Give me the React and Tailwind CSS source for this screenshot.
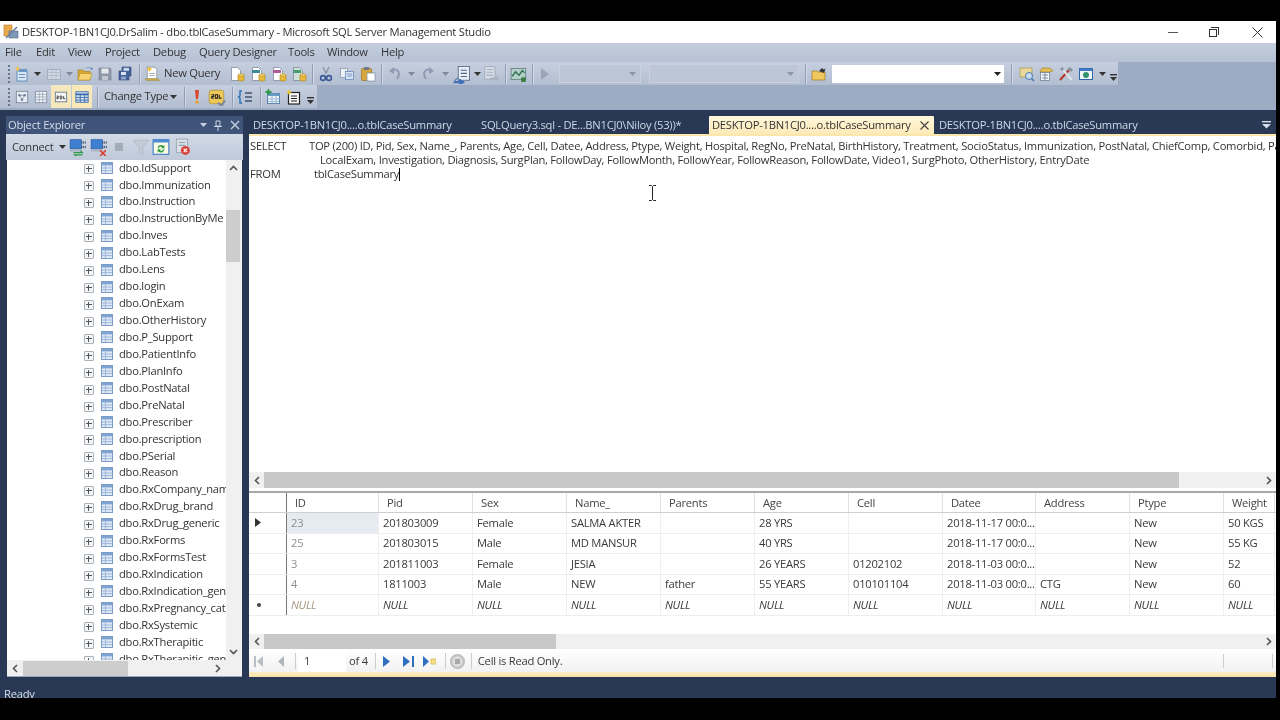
import React from "react";

const Svg = ({ children, s = 16, className = "" }) => (
  <svg width={s} height={s} viewBox="0 0 16 16" className={"block shrink-0 " + className}>{children}</svg>
);
const Slot = ({ className = "", children }) => (
  <span className={"flex shrink-0 items-center justify-center " + className}>{children}</span>
);
const Dd = ({ c = "#333" }) => (
  <svg width="7" height="4" viewBox="0 0 7 4" className="block"><path d="M0 0h7L3.5 4z" fill={c} /></svg>
);
const Sep = () => <span className="block h-[20px] w-px bg-[#8f9db5] shadow-[1px_0_0_#d5dbe6]" />;
const Grip = () => (
  <span className="flex h-[18px] w-[2px] flex-col justify-between">
    {[0, 1, 2, 3, 4].map((i) => <span key={i} className="block h-[2px] w-[2px] bg-[#66748c]" />)}
  </span>
);
const Overflow = () => (
  <svg width="7" height="8" viewBox="0 0 7 8" className="block mt-2"><path d="M0 0h7v1.4H0z" fill="#333" /><path d="M0 3h7L3.5 7z" fill="#333" /></svg>
);

const Db = ({ x = 9, y = 8 }) => (
  <g>
    <path d={`M${x} ${y + 1}v5c0 1.3 6 1.3 6 0v-5z`} fill="#e8b93a" stroke="#a87f1d" strokeWidth=".6" />
    <ellipse cx={x + 3} cy={y + 1} rx="3" ry="1.2" fill="#f5d873" stroke="#a87f1d" strokeWidth=".5" />
  </g>
);
const DocIcon = ({ fill = "#fff", bar, children }) => (
  <Svg>
    <path d="M2.5 1.5h6l3 3v10h-9z" fill={fill} stroke="#7e8ba0" strokeWidth=".8" />
    {bar && <rect x="2" y="4" width="8" height="3" fill={bar} />}
    {children}
    <Db />
  </Svg>
);
const NewProj = () => (
  <Svg>
    <rect x="3" y="5" width="10" height="10" fill="#d7e6f5" stroke="#4d7fae" strokeWidth=".8" />
    <rect x="5" y="3" width="8" height="3" fill="#6d97c4" />
    <path d="M3.5 0l1 2 2 .7-2 .8-1 2-.8-2-2-.8 2-.7z" fill="#f3c13a" />
    <rect x="5" y="8" width="6" height="1" fill="#7193ba" /><rect x="5" y="11" width="6" height="1" fill="#7193ba" />
  </Svg>
);
const DimGrid = () => (
  <Svg>
    <rect x="1.5" y="3.5" width="13" height="10" fill="#d0d7e3" stroke="#a4afc0" />
    <path d="M1.5 6.5h13M1.5 9.5h13M6 3.5v10M10 3.5v10" stroke="#aab4c4" strokeWidth=".7" />
  </Svg>
);
const Folder = () => (
  <Svg>
    <path d="M1 4h5l1 1.5h6V14H1z" fill="#d9a531" stroke="#a47a1b" strokeWidth=".6" />
    <path d="M3 7.5h12L13 14H1z" fill="#f6d474" stroke="#b88d2a" strokeWidth=".6" />
    <path d="M8 4c2-3 4-3 6-1.5l-1 .8 2.4.7V1.5l-.9.6C12 .3 9 .5 8 4z" fill="#5f7faa" />
  </Svg>
);
const Save = () => (
  <Svg>
    <path d="M2 2h11l1 1v11H2z" fill="#8d97a8" stroke="#76808f" strokeWidth=".6" />
    <rect x="4.5" y="2.5" width="7" height="5" fill="#e5e8ed" />
    <rect x="5" y="10" width="6" height="4" fill="#c2c8d2" />
  </Svg>
);
const SaveAll = () => (
  <Svg>
    <path d="M5 1h9v9h-2v4H2V5h3z" fill="#45629b" stroke="#2f4678" strokeWidth=".6" />
    <rect x="6.5" y="1.8" width="5.5" height="3" fill="#c9d6ea" />
    <rect x="4" y="6" width="5" height="3" fill="#d9e2f0" />
    <rect x="4" y="10.5" width="5" height="3" fill="#8ba3c8" />
  </Svg>
);
const NewQuery = () => (
  <Svg s={17}>
    <path d="M4 2h7l2 2v9H4z" fill="#fff" stroke="#7c8696" strokeWidth=".7" />
    <path d="M2 13h12l1.5 1.5H3z" fill="#d9b43c" stroke="#8c7a2c" strokeWidth=".4" />
    <path d="M6 1l1 2 2 .8-2 .8-1 2-.9-2-2-.8 2-.8z" fill="#f2c328" />
    <path d="M6 8h5M6 10h5" stroke="#8d97a8" strokeWidth=".8" />
  </Svg>
);
const Cut = () => (
  <Svg>
    <path d="M5 1l3.3 7M11 1L7.7 8" stroke="#8d98a8" strokeWidth="1.5" />
    <circle cx="5" cy="12" r="2.4" fill="none" stroke="#3d5a96" strokeWidth="1.6" />
    <circle cx="11" cy="12" r="2.4" fill="none" stroke="#3d5a96" strokeWidth="1.6" />
  </Svg>
);
const Copy = () => (
  <Svg>
    <rect x="1.5" y="2.5" width="7" height="9" fill="#eef2f8" stroke="#8794a8" strokeWidth=".7" />
    <rect x="6.5" y="5.5" width="8" height="8" fill="#d7e4f5" stroke="#5b7fb3" strokeWidth=".7" />
    <path d="M8 8h5M8 10h5" stroke="#5b7fb3" strokeWidth=".7" />
  </Svg>
);
const Paste = () => (
  <Svg>
    <rect x="1.5" y="2.5" width="10" height="12" rx="1" fill="#d7a63c" stroke="#9a7320" strokeWidth=".7" />
    <rect x="4" y="1" width="5" height="3" fill="#6f7a8c" />
    <rect x="7" y="7" width="8" height="8" fill="#fff" stroke="#7e8ba0" strokeWidth=".7" />
  </Svg>
);
const Undo = ({ flip }) => (
  <Svg className={flip ? "-scale-x-100" : ""}>
    <path d="M5 4c6-2 9 3 5 9" fill="none" stroke="#8e9bb0" strokeWidth="2" />
    <path d="M7 1L2 5l5 3z" fill="#8e9bb0" />
  </Svg>
);
const Results = () => (
  <Svg s={20}>
    <rect x="5" y="2" width="9" height="11" fill="#e9eef6" stroke="#586a8a" strokeWidth=".7" />
    <path d="M7 5h5M7 7.5h5M7 10h5" stroke="#566a8c" strokeWidth=".9" />
    <path d="M5 11c-2 1-3 2-3 3h4v-2l4 2.5L6 17v-2H1" fill="#3b72c4" stroke="#2b5ea8" strokeWidth=".5" />
  </Svg>
);
const ResultsDim = () => (
  <Svg s={18}>
    <rect x="2.5" y="1.5" width="9" height="11" fill="#d9dee7" stroke="#9aa5b7" strokeWidth=".7" />
    <path d="M4 4h6M4 6.5h6M4 9h6" stroke="#a4aebe" strokeWidth=".9" />
    <path d="M7 11h5V9l3.5 3-3.5 3v-2H7z" fill="#a9b2c0" />
  </Svg>
);
const Chart = () => (
  <Svg s={18}>
    <rect x="1" y="3" width="13" height="10" fill="#b3d1c8" stroke="#5d7a7a" strokeWidth=".7" />
    <path d="M2 10l3-4 3 3 3-4 2 2" fill="none" stroke="#2f6e52" strokeWidth="1.2" />
    <rect x="10" y="11" width="4" height="4" fill="#3a7a3a" />
  </Svg>
);
const Play = ({ c = "#9aa6b8" }) => <Svg><path d="M4 2l8 6-8 6z" fill={c} /></Svg>;
const FolderFind = () => (
  <Svg>
    <path d="M1 5h5l1 1h7v8H1z" fill="#efc95f" stroke="#a47a1b" strokeWidth=".7" />
    <path d="M8 5l3-3 1.5 1.5 2-1L13 7z" fill="#333" />
  </Svg>
);
const Explorer = () => (
  <Svg>
    <rect x="1" y="2" width="12" height="9" fill="#e8d79a" stroke="#a68b3d" strokeWidth=".6" />
    <circle cx="10" cy="10" r="3.5" fill="#c8dcf2" stroke="#4d78ab" />
    <path d="M12.5 12.5l2.5 2.5" stroke="#4d78ab" strokeWidth="1.6" />
  </Svg>
);
const Props = () => (
  <Svg>
    <path d="M4 2h8l3 3-4 1H2z" fill="#e3bd58" stroke="#a47a1b" strokeWidth=".6" />
    <rect x="2.5" y="6.5" width="9" height="8" fill="#f4f6f9" stroke="#66758c" strokeWidth=".7" />
    <path d="M4 9h6M4 12h6M7 7v7" stroke="#6b7a92" strokeWidth=".8" />
  </Svg>
);
const Tools = () => (
  <Svg>
    <path d="M2 14L11 4" stroke="#b3362c" strokeWidth="2" />
    <path d="M14 14L5 4" stroke="#dfe4ea" strokeWidth="2" />
    <path d="M9 3l3-2 3 3-2 2z" fill="#8a94a5" />
    <path d="M2 3l2-2 2 2-1.5 2z" fill="#8a94a5" />
  </Svg>
);
const Web = () => (
  <Svg>
    <rect x="1.5" y="2.5" width="13" height="11" fill="#f0f5fb" stroke="#2f65a8" />
    <rect x="1.5" y="2.5" width="13" height="2.5" fill="#3f7cc4" />
    <circle cx="8" cy="9" r="3" fill="#34906b" />
  </Svg>
);
const DiagramPane = () => (
  <Svg s={14}>
    <rect x="1.5" y="1.5" width="13" height="13" fill="#e8edf4" stroke="#7b8798" />
    <circle cx="5" cy="6" r="1.4" fill="#6a7b93" /><circle cx="11" cy="6" r="1.4" fill="#6a7b93" /><circle cx="8" cy="11" r="1.4" fill="#6a7b93" />
    <path d="M5 6h6L8 11z" fill="none" stroke="#6a7b93" strokeWidth=".7" />
  </Svg>
);
const GridPane = () => (
  <Svg s={14}>
    <rect x="1.5" y="1.5" width="13" height="13" fill="#eef1f6" stroke="#8693a6" />
    <path d="M1.5 5h13M1.5 8h13M1.5 11h13M6 1.5v13M10 1.5v13" stroke="#8693a6" strokeWidth=".7" />
  </Svg>
);
const SqlPane = () => (
  <Svg s={14}>
    <rect x="1.5" y="2.5" width="13" height="11" fill="#f7f7f7" stroke="#66758a" />
    <path d="M3 7h2v1.5H3.3V10H5M7 7h2v3H7zM11 7v3h2" fill="none" stroke="#222" strokeWidth=".9" />
  </Svg>
);
const ResPane = () => (
  <Svg s={14}>
    <rect x="1" y="2" width="14" height="12" fill="#d5e3f2" stroke="#3769a8" />
    <path d="M1 5h14" stroke="#3769a8" strokeWidth="2" />
    <path d="M1 8.5h14M1 11.5h14M6 5v9M11 5v9" stroke="#3769a8" strokeWidth="1" />
  </Svg>
);
const Exclaim = () => (
  <Svg>
    <path d="M6 1h4L9 10H7z" fill="#d9432f" /><circle cx="8" cy="13" r="1.7" fill="#e3a021" />
  </Svg>
);
const SqlCheck = () => (
  <Svg s={18}>
    <rect x="1" y="2" width="13" height="12" rx="2" fill="#ecc858" stroke="#a9882c" strokeWidth=".6" />
    <path d="M3 6h2v1.5H3.3V9H5M6.5 6H8.5v3h-2zM10 6v3h2" fill="none" stroke="#222" strokeWidth=".9" />
    <path d="M9 13l3 3 3-5" fill="none" stroke="#7b8799" strokeWidth="1.8" />
  </Svg>
);
const Indent = () => (
  <Svg>
    <path d="M5 2H3v5l-1.5 1L3 9v5h2" fill="none" stroke="#2a6db5" strokeWidth="1.4" />
    <path d="M8 4h7M8 8h7M8 12h7" stroke="#40536f" strokeWidth="1.3" />
  </Svg>
);
const AddTable = () => (
  <Svg>
    <rect x="2.5" y="4.5" width="12" height="10" fill="#eef4fa" stroke="#5a85b1" />
    <rect x="2.5" y="4.5" width="12" height="2.5" fill="#6a9ac8" />
    <path d="M2.5 10h12M2.5 12.5h12M7 7v7.5M11 7v7.5" stroke="#7fa2c6" strokeWidth=".7" />
    <path d="M3.5 0v6M.5 3h6" stroke="#2f9a45" strokeWidth="1.8" />
  </Svg>
);
const NoteStar = () => (
  <Svg>
    <rect x="3.5" y="3.5" width="11" height="11.5" fill="#fafafa" stroke="#222" strokeWidth="1.2" />
    <path d="M6 7h6M6 9.5h6M6 12h6" stroke="#222" strokeWidth="1" />
    <path d="M4 0l1 2.4 2.4.6L5 4 4 6.5 3 4 .6 3 3 2.4z" fill="#ecc52a" />
  </Svg>
);
const SrvA = ({ children }) => (
  <Svg s={18}>
    <rect x="1" y="1.5" width="10" height="8" fill="#3f7fd1" stroke="#28599f" strokeWidth=".6" />
    <rect x="1" y="10" width="10" height="2" fill="#a9b3c4" />
    <path d="M11.5 3v2M13 3v2M14.5 3v2M11.5 7v2M13 7v2M14.5 7v2" stroke="#3a4a66" strokeWidth=".8" />
    {children}
  </Svg>
);
const Stop = () => <span className="block h-[8px] w-[8px] bg-[#a2acb9]" />;
const Filter = () => <Svg s={18}><path d="M1 2h14L9.5 8.5V15l-3-2V8.5z" fill="#c5ccd6" stroke="#aab2bf" strokeWidth=".6" /></Svg>;
const Refresh = () => (
  <Svg s={18}>
    <rect x="1" y="1.5" width="14" height="13" fill="#fbfbe8" stroke="#3e7dc4" strokeWidth="1" />
    <rect x="1" y="1.5" width="14" height="2.5" fill="#4e8bd0" />
    <path d="M5 9a3 3 0 0 1 5-2l1-1v3H8l1-1a2 2 0 0 0-3 1zM11 10a3 3 0 0 1-5 2l-1 1v-3h3l-1 1a2 2 0 0 0 3-1z" fill="#2c9a3a" />
  </Svg>
);
const Script = () => (
  <Svg s={18}>
    <path d="M3 1h10v12H3z" fill="#dce1e8" stroke="#8f99a8" strokeWidth=".7" />
    <path d="M5 4h6M5 6.5h6" stroke="#98a2b2" />
    <circle cx="11" cy="11" r="4" fill="#d9443c" />
    <path d="M9.5 9.5l3 3M12.5 9.5l-3 3" stroke="#fff" />
  </Svg>
);
const AppIcon = () => (
  <Svg>
    <rect x="1" y="1" width="8" height="11" fill="#e9a94d" stroke="#b77a27" strokeWidth=".6" />
    <rect x="6" y="7" width="9" height="7" fill="#7f97b8" stroke="#566c8b" strokeWidth=".6" />
    <path d="M3 14L14 3" stroke="#6b7f9e" strokeWidth="1.6" />
  </Svg>
);
const TableIcon = () => (
  <svg width="12" height="12" viewBox="0 0 12 12" className="block shrink-0">
    <rect x=".5" y=".5" width="11" height="11" fill="#dfe9f6" stroke="#7b9cc5" />
    <rect x="1" y="1" width="10" height="2.4" fill="#7fa3d2" />
    <path d="M1 6h10M1 8.6h10" stroke="#9db8da" />
    <path d="M4.5 3.4V11" stroke="#9db8da" />
  </svg>
);
const Plus = () => (
  <span className="relative block h-[10px] w-[10px] shrink-0 rounded-[1px] border border-[#a9b1ba] bg-[#f4f5f6]">
    <span className="absolute left-[1px] top-[3px] h-px w-[6px] bg-[#555]" />
    <span className="absolute left-[3px] top-[1px] h-[6px] w-px bg-[#555]" />
  </span>
);
const Chev = ({ d, c = "#555" }) => (
  <svg width="9" height="9" viewBox="0 0 9 9" className="block shrink-0">
    <path d={d} fill="none" stroke={c} strokeWidth="1.6" />
  </svg>
);
const L = "M6 1L2.5 4.5 6 8";
const R = "M3 1l3.5 3.5L3 8";
const U = "M1 6l3.5-3.5L8 6";
const D = "M1 3l3.5 3.5L8 3";

const tree = ["IdSupport","Immunization","Instruction","InstructionByMe","Inves","LabTests","Lens","login","OnExam","OtherHistory","P_Support","PatientInfo","PlanInfo","PostNatal","PreNatal","Prescriber","prescription","PSerial","Reason","RxCompany_name","RxDrug_brand","RxDrug_generic","RxForms","RxFormsTest","RxIndication","RxIndication_generic","RxPregnancy_cat","RxSystemic","RxTherapitic","RxTherapitic_generic"];

const heads = ["ID","Pid","Sex","Name_","Parents","Age","Cell","Datee","Address","Ptype","Weight"];
const rows = [
  ["23","201803009","Female","SALMA AKTER","","28 YRS","","2018-11-17 00:0...","","New","50 KGS"],
  ["25","201803015","Male","MD MANSUR","","40 YRS","","2018-11-17 00:0...","","New","55 KG"],
  ["3","201811003","Female","JESIA","","26 YEARS","01202102","2018-11-03 00:0...","","New","52"],
  ["4","1811003","Male","NEW","father","55 YEARS","010101104","2018-11-03 00:0...","CTG","New","60"],
  Array(11).fill("NULL"),
];
const cols = "grid grid-cols-[38px_92px_94px_94px_94px_94px_94px_94px_93px_94px_94px_51px]";

export default function App() {
  return (
    <div className="relative flex h-[720px] w-[1280px] flex-col overflow-hidden bg-black pb-[22px] pr-[4px] pt-[21px] font-['Open_Sans','Noto_Sans',sans-serif] text-[11.2px] tracking-[-0.25px] text-[#3a3a3a] blur-[0.35px]">
      {/* title bar */}
      <div className="flex h-[22px] shrink-0 items-center bg-white pl-[3px]">
        <AppIcon />
        <span className="ml-[3px] whitespace-nowrap text-[#333]">DESKTOP-1BN1CJ0.DrSalim - dbo.tblCaseSummary - Microsoft SQL Server Management Studio</span>
        <span className="ml-auto flex items-center">
          <span className="block h-px w-[10px] bg-[#555]" />
          <span className="relative ml-[31px] block h-[10px] w-[10px]">
            <span className="absolute bottom-0 left-0 h-[8px] w-[8px] border border-[#333] bg-white" />
            <span className="absolute right-0 top-0 h-[8px] w-[8px] border-r border-t border-[#333]" />
          </span>
          <svg width="11" height="11" viewBox="0 0 11 11" className="ml-[33px] mr-[13px] block"><path d="M.5.5l10 10M10.5.5l-10 10" stroke="#333" /></svg>
        </span>
      </div>
      {/* menu */}
      <div className="flex h-[19px] shrink-0 items-center bg-gradient-to-b from-[#c3cddd] to-[#b6c2d5] pl-[5px] text-[#333]">
        <span className="w-[31px]">File</span><span className="w-[32px]">Edit</span><span className="w-[37px]">View</span><span className="w-[48px]">Project</span><span className="w-[46px]">Debug</span><span className="w-[89px]">Query Designer</span><span className="w-[39px]">Tools</span><span className="w-[54px]">Window</span><span>Help</span>
      </div>
      {/* toolbars */}
      <div className="flex h-[48px] shrink-0 flex-col bg-[#9dabc3]">
        <div className="flex h-[23px] w-[1118px] shrink-0 items-center bg-gradient-to-b from-[#c6cfdf] to-[#b2bed1] pl-[5px]">
          <Slot className="w-[8px]"><Grip /></Slot>
          <Slot className="w-[17px]"><NewProj /></Slot>
          <Slot className="w-[14px]"><Dd /></Slot>
          <Slot className="w-[20px]"><DimGrid /></Slot>
          <Slot className="w-[10px]"><Dd c="#7e8a9c" /></Slot>
          <Slot className="w-[21px]"><Folder /></Slot>
          <Slot className="w-[20px]"><Save /></Slot>
          <Slot className="w-[20px]"><SaveAll /></Slot>
          <Slot className="w-[8px]"><Sep /></Slot>
          <Slot className="w-[17px]"><NewQuery /></Slot>
          <span className="w-[66px] whitespace-nowrap pl-[4px] text-[#333]">New Query</span>
          <Slot className="w-[21px]"><DocIcon /></Slot>
          <Slot className="w-[21px]"><DocIcon bar="#3f8a96" /></Slot>
          <Slot className="w-[21px]"><DocIcon bar="#b05a94" /></Slot>
          <Slot className="w-[20px]"><DocIcon fill="#cfe0d8" bar="#4d9a72" /></Slot>
          <Slot className="w-[7px]"><Sep /></Slot>
          <Slot className="w-[20px]"><Cut /></Slot>
          <Slot className="w-[21px]"><Copy /></Slot>
          <Slot className="w-[21px]"><Paste /></Slot>
          <Slot className="w-[7px]"><Sep /></Slot>
          <Slot className="w-[19px]"><Undo /></Slot>
          <Slot className="w-[14px]"><Dd c="#7e8a9c" /></Slot>
          <Slot className="w-[20px]"><Undo flip /></Slot>
          <Slot className="w-[14px]"><Dd c="#7e8a9c" /></Slot>
          <Slot className="w-[20px]"><Results /></Slot>
          <Slot className="w-[10px]"><Dd /></Slot>
          <Slot className="w-[18px]"><ResultsDim /></Slot>
          <Slot className="w-[10px]"><Sep /></Slot>
          <Slot className="w-[17px]"><Chart /></Slot>
          <Slot className="w-[10px]"><Sep /></Slot>
          <Slot className="w-[16px]"><Play /></Slot>
          <div className="ml-[6px] flex h-[19px] w-[82px] items-center justify-end border border-[#cad1dd] bg-[#bcc6d7] pr-[4px]"><Dd c="#8a95a6" /></div>
          <div className="ml-[8px] flex h-[19px] w-[150px] items-center justify-end border border-[#cad1dd] bg-[#bcc6d7] pr-[4px]"><Dd c="#8a95a6" /></div>
          <Slot className="w-[12px]"><Sep /></Slot>
          <Slot className="w-[15px]"><FolderFind /></Slot>
          <div className="ml-[6px] flex h-[18px] w-[172px] items-center justify-end rounded-[1px] bg-white pr-[3px]"><Dd c="#222" /></div>
          <Slot className="w-[14px]"><Sep /></Slot>
          <Slot className="w-[17px]"><Explorer /></Slot>
          <Slot className="w-[21px]"><Props /></Slot>
          <Slot className="w-[20px]"><Tools /></Slot>
          <Slot className="w-[20px]"><Web /></Slot>
          <Slot className="w-[12px]"><Dd /></Slot>
          <Slot className="w-[10px]"><Overflow /></Slot>
        </div>
        <div className="flex h-[23px] w-[317px] shrink-0 items-center bg-gradient-to-b from-[#c6cfdf] to-[#b2bed1] pl-[5px]">
          <Slot className="w-[8px]"><Grip /></Slot>
          <Slot className="w-[17px]"><DiagramPane /></Slot>
          <Slot className="w-[21px]"><GridPane /></Slot>
          <Slot className="h-[23px] w-[20px] bg-[#f6e8bd]"><SqlPane /></Slot>
          <Slot className="ml-px h-[23px] w-[20px] bg-[#f9e8b8]"><ResPane /></Slot>
          <Slot className="w-[11px]"><Sep /></Slot>
          <span className="w-[66px] shrink-0 whitespace-nowrap pl-[1px] text-[#333]">Change Type</span>
          <Slot className="w-[9px]"><Dd /></Slot>
          <Slot className="w-[12px]"><Sep /></Slot>
          <Slot className="w-[14px]"><Exclaim /></Slot>
          <Slot className="w-[26px]"><SqlCheck /></Slot>
          <Slot className="w-[4px]"><Sep /></Slot>
          <Slot className="w-[22px]"><Indent /></Slot>
          <Slot className="w-[8px]"><Sep /></Slot>
          <Slot className="w-[17px]"><AddTable /></Slot>
          <Slot className="w-[24px]"><NoteStar /></Slot>
          <Slot className="w-[11px]"><Overflow /></Slot>
        </div>
      </div>
      {/* main */}
      <div className="flex min-h-0 flex-1 flex-col bg-[#293955]">
        <div className="flex h-[567px] shrink-0 pl-[6px] pt-[6px]">
          {/* object explorer */}
          <div className="flex w-[237px] shrink-0 flex-col">
            <div className="flex h-[18px] shrink-0 items-center rounded-t-[1px] bg-[#3f5478] pl-[2px] text-[#d3dceb]">
              <span>Object Explorer</span>
              <span className="ml-auto"><Dd c="#c9d3e2" /></span>
              <svg width="8" height="11" viewBox="0 0 8 11" className="ml-[7px] block"><path d="M2 1h4v5H2zM0 6.5h8M4 7v4" fill="none" stroke="#c9d3e2" /></svg>
              <svg width="10" height="10" viewBox="0 0 10 10" className="ml-[8px] mr-[3px] block"><path d="M1 1l8 8M9 1l-8 8" stroke="#c9d3e2" strokeWidth="1.3" /></svg>
            </div>
            <div className="flex h-[26px] shrink-0 items-center bg-gradient-to-b from-[#d2dae6] to-[#bfc9da] pl-[6px] text-[#333]">
              <span className="w-[46px] shrink-0 whitespace-nowrap">Connect</span>
              <Slot className="w-[9px]"><Dd /></Slot>
              <Slot className="ml-[2px] w-[18px]"><SrvA><path d="M4 13h8l-2-2M12 15H5l2 1.5" fill="none" stroke="#2f9a45" strokeWidth="1" /></SrvA></Slot>
              <Slot className="ml-[2px] w-[20px]"><SrvA><path d="M9 11l5 5M14 11l-5 5" stroke="#d9432f" strokeWidth="1.4" /></SrvA></Slot>
              <Slot className="w-[20px]"><Stop /></Slot>
              <Slot className="ml-[2px] w-[20px]"><Filter /></Slot>
              <Slot className="w-[20px]"><Refresh /></Slot>
              <Slot className="ml-[1px] w-[20px]"><Script /></Slot>
            </div>
            <div className="mx-px flex min-h-0 flex-1 flex-col border-b border-[#9ba5b5] bg-white">
              <div className="flex min-h-0 flex-1">
                <div className="min-w-0 flex-1 overflow-hidden">
                  {tree.map((t) => (
                    <div key={t} className="flex h-[16.94px] items-center pb-[1px] pl-[77px] text-[#333]">
                      <span className="mt-[3px]"><Plus /></span>
                      <span className="ml-[7px]"><TableIcon /></span>
                      <span className="ml-[6px] whitespace-nowrap">dbo.{t}</span>
                    </div>
                  ))}
                </div>
                <div className="flex w-[16px] shrink-0 flex-col items-center bg-[#f0f0f0] pr-[2px]">
                  <span className="mt-[4px] h-[9px]"><Chev d={U} /></span>
                  <span className="mt-[37px] block h-[52px] w-[14px] bg-[#cdcdcd]" />
                  <span className="mb-[4px] mt-auto h-[9px]"><Chev d={D} /></span>
                </div>
              </div>
              <div className="flex h-[16px] shrink-0 items-center bg-[#f0f0f0]">
                <span className="ml-[4px]"><Chev d={L} /></span>
                <span className="ml-[3px] block h-[15px] w-[105px] bg-[#cdcdcd]" />
                <span className="ml-auto mr-[20px]"><Chev d={R} /></span>
              </div>
            </div>
          </div>
          {/* right column */}
          <div className="ml-[6px] flex min-w-0 flex-1 flex-col">
            <div className="flex h-[18px] shrink-0 items-center text-[#cdd8e8]">
              <span className="w-[232px] shrink-0 whitespace-nowrap pl-[4px] pt-[1px]">DESKTOP-1BN1CJ0....o.tblCaseSummary</span>
              <span className="w-[228px] shrink-0 whitespace-nowrap pt-[1px]">SQLQuery3.sql - DE...BN1CJ0\Niloy (53))*</span>
              <span className="flex h-[18px] w-[225px] shrink-0 items-center whitespace-nowrap rounded-t-[1px] bg-gradient-to-b from-[#fff8dc] to-[#fdeab8] pl-[3px] pt-[1px] text-[#333]">
                DESKTOP-1BN1CJ0....o.tblCaseSummary
                <svg width="9" height="9" viewBox="0 0 9 9" className="ml-auto mr-[5px] block"><path d="M.5.5l8 8M8.5.5l-8 8" stroke="#444" strokeWidth="1.1" /></svg>
              </span>
              <span className="whitespace-nowrap pl-[5px] pt-[1px]">DESKTOP-1BN1CJ0....o.tblCaseSummary</span>
              <span className="ml-auto mr-[5px]">
                <svg width="9" height="8" viewBox="0 0 9 8" className="block"><path d="M0 0h9v1.4H0z" fill="#d5deeb" /><path d="M0 3h9L4.5 7.5z" fill="#d5deeb" /></svg>
              </span>
            </div>
            <div className="h-[2px] shrink-0 bg-[#fbe6ac]" />
            <div className="flex h-[336px] shrink-0 flex-col overflow-hidden bg-white pl-[1px] pt-[3px] text-[#333]">
              <div className="flex h-[14px] items-center whitespace-nowrap"><span className="w-[59px] shrink-0">SELECT</span><span className="shrink-0">TOP (200) ID, Pid, Sex, Name_, Parents, Age, Cell, Datee, Address, Ptype, Weight, Hospital, RegNo, PreNatal, BirthHistory, Treatment, SocioStatus, Immunization, PostNatal, ChiefComp, Comorbid, PastHistory,</span></div>
              <div className="flex h-[14px] items-center whitespace-nowrap pl-[70px]">LocalExam, Investigation, Diagnosis, SurgPlan, FollowDay, FollowMonth, FollowYear, FollowReason, FollowDate, Video1, SurgPhoto, OtherHistory, EntryDate</div>
              <div className="flex h-[14px] items-center whitespace-nowrap"><span className="w-[64px] shrink-0">FROM</span><span>tblCaseSummary</span><span className="block h-[13px] w-px bg-black" /></div>
            </div>
            <div className="flex h-[16px] shrink-0 items-center bg-[#f0f0f0]">
              <span className="ml-[4px]"><Chev d={L} /></span>
              <span className="ml-[2px] block h-[16px] w-[915px] bg-[#c8c8c8]" />
              <span className="ml-auto mr-[3px]"><Chev d={R} /></span>
            </div>
            <div className="h-[5px] shrink-0 border-b-2 border-[#a8a8a8] bg-white" />
            {/* results */}
            <div className="flex min-h-0 flex-1 flex-col overflow-hidden bg-white">
              <div className={cols + " h-[20px] shrink-0 border-b border-[#cfcfcf] text-[#444]"}>
                <span className="border-r border-[#777]" />
                {heads.map((h) => (
                  <span key={h} className="flex items-center whitespace-nowrap border-r border-[#e2e2e2] pl-[8px] pt-[1px]">{h}</span>
                ))}
              </div>
              {rows.map((r, ri) => (
                <div key={ri} className={cols + " h-[20.5px] shrink-0 border-b border-[#eeeeee]"}>
                  <span className="flex items-center justify-center border-r border-[#777] pr-[2px]">
                    {ri === 0 && <svg width="6" height="9" viewBox="0 0 6 9" className="mr-[18px] block"><path d="M0 0l6 4.5L0 9z" fill="#333" /></svg>}
                    {ri === 4 && <span className="mr-[16px] block h-[4px] w-[4px] rounded-full bg-[#444]" />}
                  </span>
                  {r.map((c, ci) => (
                    <span key={ci} className={"flex items-center overflow-hidden whitespace-nowrap border-r border-[#efefef] pl-[4px] pt-[1px] " + (ci === 0 ? (ri === 4 ? "text-[#a4957f] " : "text-[#8f8f8f] ") : "text-[#3a3a3a] ") + (ri === 4 ? "italic " : "") + (ci === 0 && ri === 0 ? "bg-[#e6ebf1]" : "")}>{c}</span>
                  ))}
                </div>
              ))}
              <div className="flex-1" />
              <div className="flex h-[15px] shrink-0 items-center bg-[#f0f0f0]">
                <span className="ml-[4px]"><Chev d={L} /></span>
                <span className="ml-[2px] block h-[15px] w-[292px] bg-[#c8c8c8]" />
                <span className="ml-auto mr-[3px]"><Chev d={R} /></span>
              </div>
              <div className="flex h-[23px] shrink-0 items-center bg-gradient-to-b from-white to-[#f2f2f2] pl-[5px] pt-[1px]">
                <svg width="9" height="11" viewBox="0 0 9 11" className="block"><path d="M0 0h2v11H0zM9 0v11L3 5.5z" fill="#b9bec6" /></svg>
                <svg width="6" height="11" viewBox="0 0 6 11" className="ml-[15px] block"><path d="M6 0v11L0 5.5z" fill="#b0b6bf" /></svg>
                <span className="ml-[11px] block h-[16px] w-px bg-[#ccc]" />
                <span className="ml-[2px] flex h-[22px] w-[48px] items-center bg-white pl-[6px]">1</span>
                <span className="ml-[3px] whitespace-nowrap">of 4</span>
                <span className="ml-[7px] block h-[16px] w-px bg-[#ccc]" />
                <svg width="7" height="11" viewBox="0 0 7 11" className="ml-[7px] block"><path d="M0 0l7 5.5L0 11z" fill="#2f6fc0" /></svg>
                <svg width="11" height="11" viewBox="0 0 11 11" className="ml-[13px] block"><path d="M0 0l7 5.5L0 11zM9 0h2v11H9z" fill="#2f6fc0" /></svg>
                <svg width="13" height="11" viewBox="0 0 13 11" className="ml-[9px] block"><path d="M0 0l6 5.5L0 11z" fill="#2f6fc0" /><path d="M8 3h5v5H8z" fill="#f6e08a" stroke="#d4b74e" strokeWidth=".8" /></svg>
                <span className="ml-[9px] block h-[16px] w-px bg-[#ccc]" />
                <span className="ml-[4px] flex h-[15px] w-[15px] items-center justify-center rounded-full border-2 border-[#bcbcbc] bg-[#dcdcdc]"><span className="block h-[5px] w-[5px] bg-[#a8a8a8]" /></span>
                <span className="ml-[6px] block h-[16px] w-px bg-[#ccc]" />
                <span className="ml-[6px] whitespace-nowrap">Cell is Read Only.</span>
                <span className="ml-auto block h-[14px] w-px bg-[#ccc]" />
                <span className="ml-[48px] mr-[3px] block h-[14px] w-px bg-[#ccc]" />
              </div>
              <div className="h-[5px] shrink-0 bg-gradient-to-b from-[#fbeec6] to-[#f8e0a4]" />
            </div>
          </div>
        </div>
        <div className="h-[21px] shrink-0 overflow-hidden pl-[4px] pt-[9px] leading-[16px] text-[#d6deea]">Ready</div>
      </div>
      {/* mouse I-beam over the editor */}
      <svg width="9" height="16" viewBox="0 0 9 16" className="absolute left-[648px] top-[185px] block"><path d="M1 .5h2.5l1 1 1-1H8M4.5 1.5v13M1 15.5h2.5l1-1 1 1H8" fill="none" stroke="#222" strokeWidth="1" /></svg>
    </div>
  );
}
